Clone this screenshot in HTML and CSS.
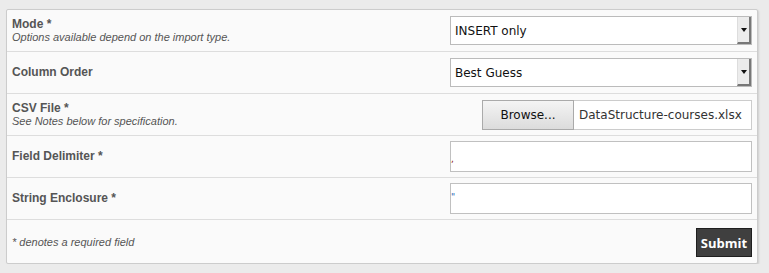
FILE: index.html
```html
<!DOCTYPE html>
<html>
  <head>
    <title>Import</title>
    <link rel="stylesheet" href="styles.css">
  </head>
  <body>
    <div class="panel">
      <div class="row">
        <div class="label">
          <strong>Mode *</strong>
          <em>Options available depend on the import type.</em>
        </div>
        <div class="control">
          <div class="select"><span>INSERT only</span><span class="arrow"></span></div>
        </div>
      </div>

      <div class="row">
        <div class="label"><strong>Column Order</strong></div>
        <div class="control">
          <div class="select"><span>Best Guess</span><span class="arrow"></span></div>
        </div>
      </div>

      <div class="row">
        <div class="label">
          <strong>CSV File *</strong>
          <em>See Notes below for specification.</em>
        </div>
        <div class="control">
          <div class="file">
            <span class="browse">Browse...</span>
            <span class="filename">DataStructure-courses.xlsx</span>
          </div>
        </div>
      </div>

      <div class="row">
        <div class="label"><strong>Field Delimiter *</strong></div>
        <div class="control">
          <div class="text-input"><span class="delim">,</span></div>
        </div>
      </div>

      <div class="row">
        <div class="label"><strong>String Enclosure *</strong></div>
        <div class="control">
          <div class="text-input"><span class="quote">"</span></div>
        </div>
      </div>

      <div class="row footer">
        <div class="label"><em>* denotes a required field</em></div>
        <div class="control">
          <button type="button" class="submit">Submit</button>
        </div>
      </div>
    </div>
  </body>
</html>
```

FILE: styles.css
```css
body {
  margin: 0;
  padding: 9px 0 0 6px;
  background-color: #ebebeb;
  font-family: 'Liberation Sans', Arial, sans-serif;
  color: #555555;
}

.panel {
  width: 752px;
  box-sizing: border-box;
  background-color: #fafafa;
  border: 1px solid #cccccc;
  border-radius: 2px;
  box-shadow: 1px 1px 2px rgba(0, 0, 0, 0.12);
}

.row {
  display: flex;
  align-items: center;
  justify-content: space-between;
  height: 41px;
  padding: 0 5px 0 5px;
  border-bottom: 1px solid #dddddd;
}

.row.footer {
  height: 43px;
  border-bottom: none;
}

.label {
  display: flex;
  flex-direction: column;
}

.label strong {
  font-size: 12px;
  font-weight: bold;
  line-height: 13px;
}

.label em {
  font-size: 11px;
  line-height: 12px;
}

.control {
  display: flex;
  justify-content: flex-end;
}

/* fake mac-style select */
.select {
  width: 302px;
  height: 29px;
  box-sizing: border-box;
  display: flex;
  align-items: center;
  justify-content: space-between;
  background-color: #ffffff;
  border: 1px solid #bbbbbb;
  font-family: 'DejaVu Sans', sans-serif;
  font-size: 12px;
  color: #111111;
}

.select span:first-child {
  padding-left: 4px;
}

.arrow {
  width: 14px;
  height: 100%;
  box-sizing: border-box;
  background-color: #ececec;
  border-left: 1px solid #dddddd;
  border-right: 2px solid #777777;
  border-bottom: 2px solid #777777;
  display: flex;
  align-items: center;
  justify-content: center;
}

.arrow::after {
  content: "";
  border-left: 3px solid transparent;
  border-right: 3px solid transparent;
  border-top: 4px solid #111111;
}

.file {
  display: flex;
  height: 30px;
  font-family: 'DejaVu Sans', sans-serif;
  font-size: 12px;
}

.browse {
  width: 92px;
  box-sizing: border-box;
  display: flex;
  align-items: center;
  justify-content: center;
  border: 1px solid #aaaaaa;
  background: linear-gradient(#f4f4f4, #dcdcdc);
  color: #111111;
}

.filename {
  width: 178px;
  box-sizing: border-box;
  display: flex;
  align-items: center;
  padding-left: 5px;
  border: 1px solid #cccccc;
  border-left: none;
  background-color: #ffffff;
  color: #333333;
  white-space: nowrap;
  overflow: hidden;
}

.text-input {
  width: 302px;
  height: 31px;
  box-sizing: border-box;
  background-color: #ffffff;
  border: 1px solid #c0c0c0;
  font-family: 'DejaVu Sans', sans-serif;
  font-size: 9px;
  line-height: 20px;
  padding-left: 0;
}

.delim {
  color: #8a0c0c;
  position: relative;
  top: 7px;
}

.quote {
  color: #1a5fb0;
  position: relative;
  top: 3px;
}

.submit {
  font-family: 'Open Sans', sans-serif;
  font-weight: bold;
  font-size: 13px;
  color: #ffffff;
  background-color: #3f3f3f;
  border: 1px solid #1e1e1e;
  height: 29px;
  width: 56px;
  padding: 0;
  margin-top: 2px;
}
```
